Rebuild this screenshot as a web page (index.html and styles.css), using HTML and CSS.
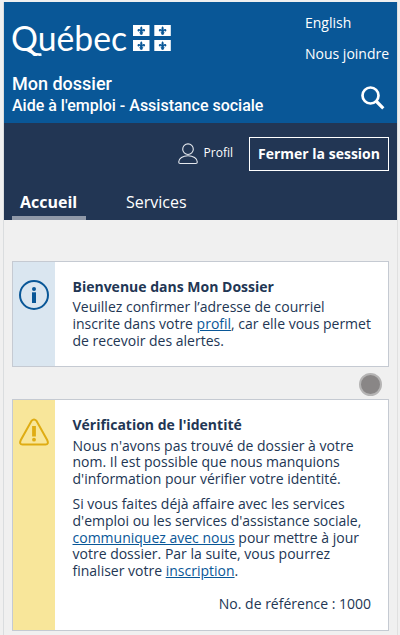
FILE: index.html
```html
<!DOCTYPE html>
<html lang="fr">
<head>
<meta charset="utf-8">
<title>Mon dossier</title>
<link rel="stylesheet" href="styles.css">
</head>
<body>
<div class="page">
  <header class="top">
    <div class="brand">
      <svg class="logo" width="162" height="36" viewBox="0 0 162 36">
        <defs>
          <g id="flag">
            <path fill="#fff" d="M0 0h16.500v11H0z"/>
            <path fill="#095797" d="M8.3 1.2c1 1 1.4 2.1.8 3.6 1-1.5 3.300-1 3 .8-.2.9-1 1.200-1.600.8.1-.8-.5-1-.9-.2l-.2.700h.8v.8h-.9l.7 1.200-1.700 1.100-1.700-1.100.7-1.200h-.9v-.8h.8L7 6.200c-.4-.8-1-.6-.9.2-.6.4-1.400.1-1.600-.8-.3-1.800 2-2.300 3-.8-.6-1.500-.2-2.600.8-3.600z"/>
          </g>
        </defs>
        <text class="wordmark" x="-1" y="28.500" textLength="116" lengthAdjust="spacingAndGlyphs">Québec</text>
        <path d="M13 27.500C18 28 22 33.800 29.500 32.500" fill="none" stroke="#fff" stroke-width="2.600"/>
        <use href="#flag" x="121" y="3"/>
        <use href="#flag" x="142.300" y="3"/>
        <use href="#flag" x="121" y="18"/>
        <use href="#flag" x="142.300" y="18"/>
      </svg>
      <nav class="links"><a>English</a><a>Nous joindre</a></nav>
    </div>
    <div class="heading">
      <div><h1>Mon dossier</h1><h2>Aide à l'emploi - Assistance sociale</h2></div>
      <svg class="search" width="26" height="26" viewBox="0 0 26 26" fill="none" stroke="#fff"><circle cx="10.500" cy="10.500" r="8" stroke-width="2.700"/><path d="M16 16l7.300 7.300" stroke-width="3.200"/></svg>
    </div>
  </header>
  <div class="bar">
    <div class="account">
      <svg width="20" height="22" viewBox="0 0 20 22" fill="none" stroke="#e4e8ee" stroke-width="1.100"><circle cx="10" cy="6.200" r="5.300"/><path d="M.7 19c0-3.600 4.200-6.200 9.300-6.200s9.300 2.600 9.300 6.200c0 1-.6 1.500-1.500 1.500H2.200c-.9 0-1.500-.5-1.500-1.500z"/></svg>
      <span class="profile">Profil</span>
      <button class="logout"><span>Fermer la session</span></button>
    </div>
    <nav class="tabs"><a class="tab active">Accueil</a><a class="tab services">Services</a></nav>
  </div>
  <main>
    <section class="card info">
      <div class="side">
        <svg width="30" height="30" viewBox="0 0 30 30"><circle cx="15" cy="15" r="14" fill="none" stroke="#095797" stroke-width="2"/><circle cx="15" cy="9" r="2" fill="#095797"/><path fill="#095797" d="M13 12.300h4V23h-4z"/></svg>
      </div>
      <div class="content">
        <h3>Bienvenue dans Mon Dossier</h3>
        <p>Veuillez confirmer l’adresse de courriel<br>inscrite dans votre <a>profil</a>, car elle vous permet<br>de recevoir des alertes.</p>
      </div>
      <i class="pointer"></i>
    </section>
    <section class="card warning">
      <div class="side">
        <svg width="30" height="28" viewBox="0 0 30 28"><path d="M12.700 2.600Q15 .2 17.300 2.600L28.300 22.300Q30 26.200 26.500 26.500H3.500Q0 26.200 1.700 22.300Z" fill="none" stroke="#dfac13" stroke-width="2"/><path fill="#dfac13" d="M13.100 8h3.800v10.500h-3.800z"/><circle cx="15" cy="21.700" r="1.900" fill="#dfac13"/></svg>
      </div>
      <div class="content">
        <h3>Vérification de l'identité</h3>
        <p>Nous n'avons pas trouvé de dossier à votre<br>nom. Il est possible que nous manquions<br>d'information pour vérifier votre identité.</p>
        <p class="second">Si vous faites déjà affaire avec les services<br>d'emploi ou les services d'assistance sociale,<br><a>communiquez avec nous</a> pour mettre à jour<br>votre dossier. Par la suite, vous pourrez<br>finaliser votre <a>inscription</a>.</p>
        <p class="ref">No. de référence : 1000</p>
      </div>
    </section>
  </main>
</div>
</body>
</html>
```

FILE: styles.css
```css
* { box-sizing: border-box; }
body { margin: 0; background: #f0f0f0; font-family: "Open Sans", sans-serif; color: #223654; }
h1, h2, h3, p { margin: 0; }
.page { margin: 2px 2px 0 3px; height: 633px; border-left: 1px solid #dadddf; border-right: 1px solid #e0e0e0; overflow: hidden; }
.top { height: 121px; background: #095797; color: #fff; padding: 0 8px; }
.brand { display: flex; justify-content: space-between; height: 70px; padding-top: 20px; }
.logo { overflow: visible; }
.wordmark { font: 400 35px Lato, sans-serif; fill: #fff; }
.links { display: flex; flex-direction: column; width: 84px; margin-top: -10px; font-size: 14px; line-height: 22px; gap: 9px; white-space: nowrap; }
.heading { display: flex; justify-content: space-between; font-family: Roboto, sans-serif; }
h1 { font-size: 18px; line-height: 24px; font-weight: 500; }
h2 { font-size: 16px; line-height: 20px; font-weight: 500; }
.search { margin: 13px 3px 0 0; }
.bar { height: 97px; background: #223654; color: #fff; padding: 14px 8px 0; }
.account { display: flex; justify-content: flex-end; height: 47px; }
.account svg { margin: 6px 6px 0 0; }
.profile { font-size: 12px; line-height: 32px; }
.logout { width: 140px; height: 34px; margin-left: 16px; padding: 0 0 2px; border: 1px solid #fff; background: none; color: #fff; font: 700 14px "Open Sans", sans-serif; }
.tabs { display: flex; height: 36px; font-size: 16px; line-height: 36px; }
.tab { height: 36px; }
.active { width: 74px; padding-left: 8px; font-weight: 700; border-bottom: 4px solid #9099a8; }
.services { margin-left: 40px; }
main { padding: 41px 8px 0; }
.card { position: relative; display: flex; border: 1px solid #c5cad2; background: #fff; }
.info { height: 106px; }
.warning { height: 232px; margin-top: 32px; }
.side { width: 42px; background: #dae6f0; padding: 18px 6px; }
.warning .side { background: #f8e69a; }
.content { flex: 1; padding: 15px 17px 0 17.500px; white-space: nowrap; }
h3 { font-size: 14px; line-height: 19px; font-weight: 700; }
p { font-size: 14px; line-height: 17px; }
.content a { color: #095797; text-decoration: underline; }
.info p { padding-top: 2px; }
.warning p { padding-top: 3.600px; line-height: 16.800px; }
.warning .second { padding-top: 8px; }
.warning .ref { text-align: right; padding-top: 16px; }
.pointer { position: absolute; right: 6px; top: 111px; width: 23px; height: 23px; border-radius: 50%; background: #898686; border: 2px solid #b5b4b4; }
```
